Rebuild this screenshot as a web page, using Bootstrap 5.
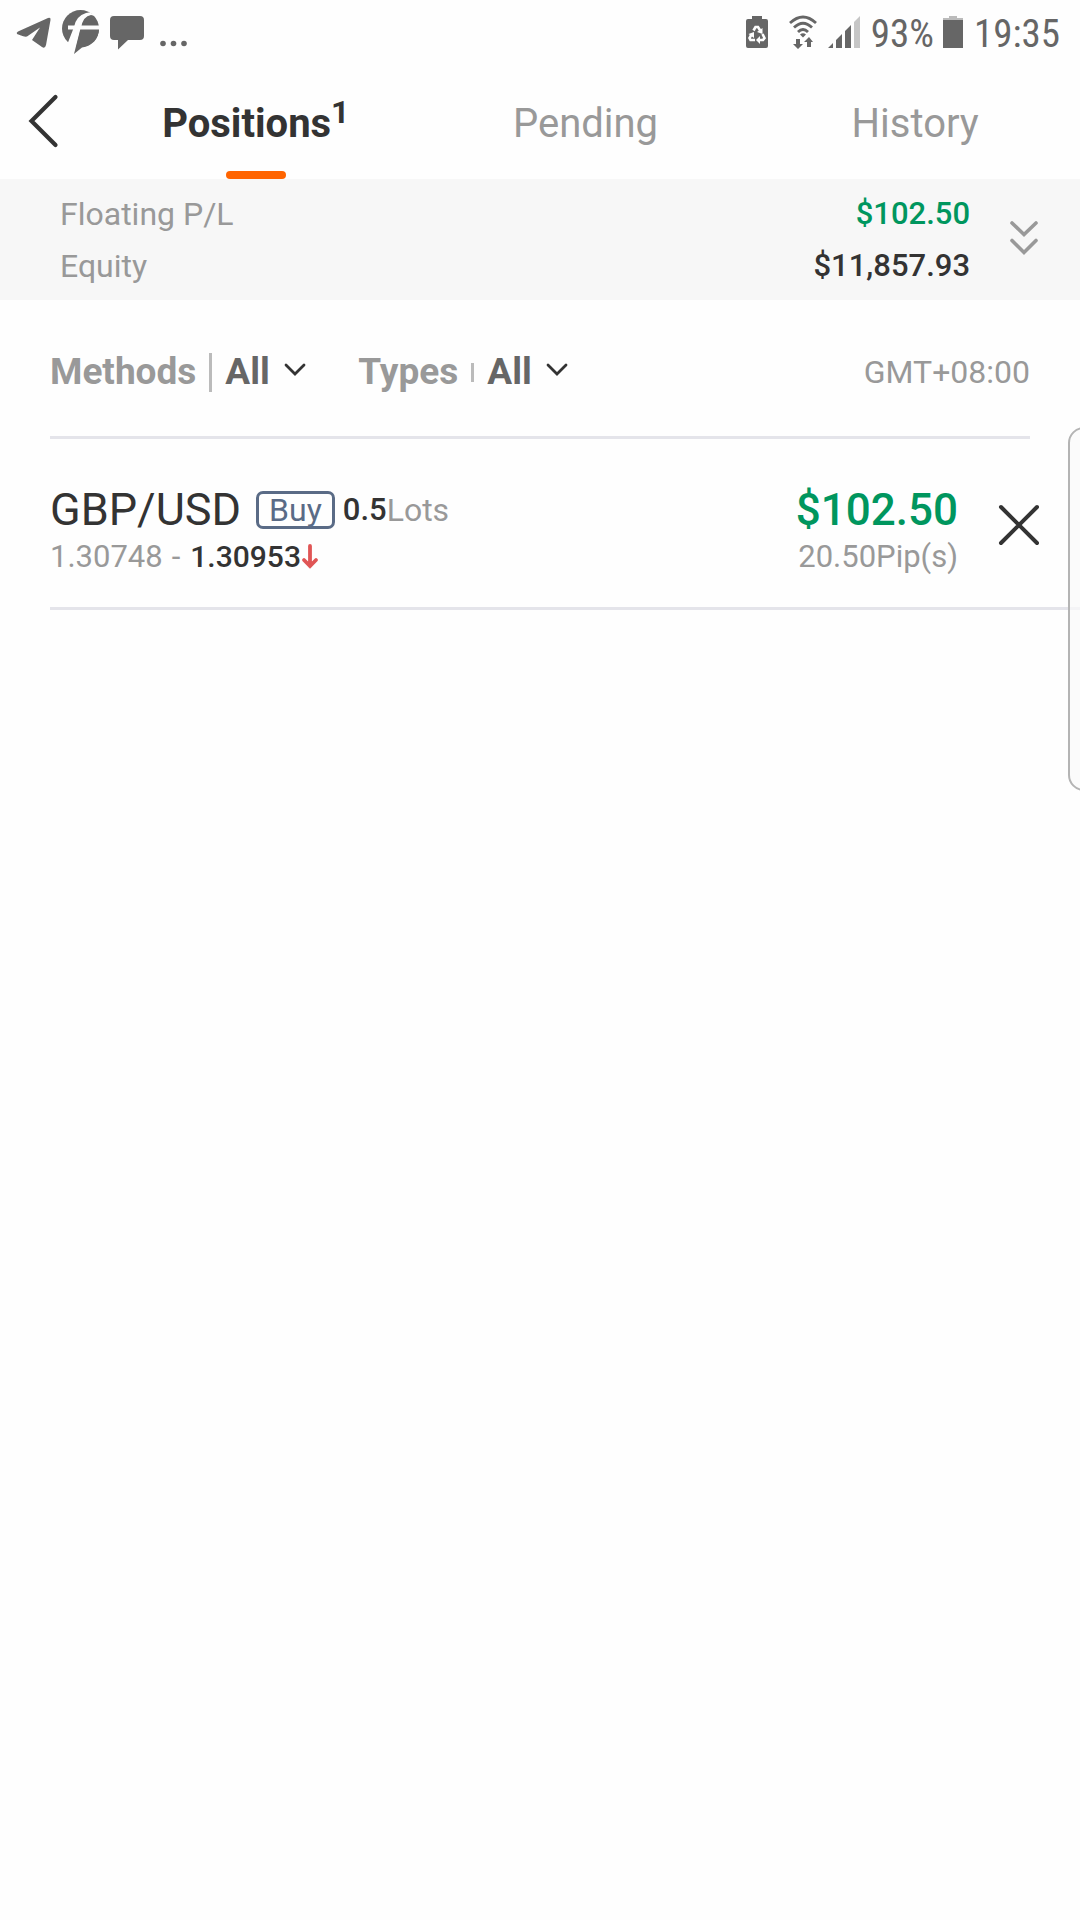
<!DOCTYPE html>
<html lang="en">
<head>
<meta charset="utf-8">
<meta name="viewport" content="width=device-width, initial-scale=1">
<title>Positions</title>
<link href="https://cdn.jsdelivr.net/npm/bootstrap@5.3.0/dist/css/bootstrap.min.css" rel="stylesheet">
<style>
body { font-family: Roboto, "Open Sans", sans-serif; font-size: 32px; line-height: 40px; color: #333; background: #fefefe; }
svg { display: block; flex: none; }
button { color: inherit; }
.ink-soft { color: #999; }
.ink-gain { color: #00965e; }
.status-bar { height: 66px; padding: 0 20px 0 16px; color: #666; font-family: "Roboto Condensed", Roboto, sans-serif; font-size: 39px; }
.status-icons { gap: 11px; }
.more-dots { margin-left: 5px; }
.status-wifi { margin-left: 21px; }
.status-signal { margin-left: 11px; }
.status-cell { margin-left: 9px; }
.status-text { margin-left: 11px; padding-top: 2px; }
.tab-bar { height: 113px; }
.back-btn { width: 91px; padding-left: 28px; padding-bottom: 4px; }
.tab-link { position: relative; height: 113px; font-size: 40px; color: #999; text-decoration: none; padding-top: 2px; }
.tab-link.active { color: #333; font-weight: 700; }
.tab-link.active::after { content: ""; position: absolute; bottom: 0; left: 50%; width: 60px; margin-left: -30px; height: 8px; border-radius: 4px; background: #ff6400; }
.tab-count { font-size: 32px; line-height: 32px; font-weight: 700; padding-bottom: 24px; }
.summary { background: #f7f7f7; height: 121px; padding: 0 40px 0 60px; }
.summary dl { row-gap: 12px; }
.summary-toggle { margin-left: 38px; padding: 0 0 4px; }
.figures { font-weight: 500; font-size: 31px; }
.filters { margin: 0 50px; padding: 51px 0 43px; border-bottom: 3px solid #e4e4ea; }
.filters label, .filters select { font-weight: 700; font-size: 37px; line-height: 42px; }
.filters select { appearance: none; border: 0; background: none; padding: 0; color: #666; }
.divider-tall, .divider-short { width: 3px; background: #bbb; margin: 0 13px; }
.divider-tall { height: 39px; }
.divider-short { height: 19px; }
.filter-chevron { margin: 0 0 4px 14px; pointer-events: none; }
.filter-gap { margin-left: 52px; }
.position-row { margin-left: 50px; padding: 45px 40px 29px 0; border-bottom: 3px solid #e4e4ea; }
.pair { font-size: 45px; line-height: 52px; }
.profit { font-size: 44px; line-height: 52px; font-weight: 500; }
.side-tag { border: 3px solid #5a6b86; border-radius: 7px; color: #5a6b86; line-height: 32px; padding: 0 10px; margin: 0 8px 0 15px; }
.rates { font-size: 31px; line-height: 42px; }
.rates .figures { font-size: 30px; }
.rate-dash { margin: 0 10px 0 9px; }
.close-btn { margin: 0 0 12px 40px; }
.edge-panel { position: absolute; top: 427px; right: -20px; width: 32px; height: 364px; border: 2px solid #b4b4b4; border-radius: 20px; background: rgba(250, 250, 250, .75); }
</style>
<script src="https://cdn.jsdelivr.net/npm/bootstrap@5.3.0/dist/js/bootstrap.bundle.min.js"></script>
</head>
<body>
<div class="position-relative overflow-hidden min-vh-100">
  <div class="status-bar d-flex justify-content-between align-items-center">
    <div class="status-icons d-flex align-items-center">
      <svg width="35" height="46" viewBox="0 0 35 46" fill="#666"><path d="M2 21.500 32 8Q35 7 34.500 10L30 35Q29 39 26 37L16 30 24 17.500 11 26.500Q8 27 5 25.500L1 24Q0 22.500 2 21.500Z"/></svg>
      <svg width="37" height="46" viewBox="0 0 37 46"><circle cx="18.500" cy="18.500" r="18.500" fill="#666"/><path fill="#fefefe" d="M33 6Q29 1 24 3 14 6 12 17L5 35 12 46 19 18Q21 6 29 5Z"/><path fill="#666" d="M18.500 18.500H37C37 29 30 36 20 37.500L12 44Z"/><path stroke="#fefefe" stroke-width="4" d="M6 17.500H37"/></svg>
      <svg width="34" height="46" viewBox="0 0 34 46" fill="#666"><path d="M4 6H30Q34 6 34 10V26Q34 30 30 30H18L8 39.500V30H4Q0 30 0 26V10Q0 6 4 6Z"/></svg>
      <svg class="more-dots" width="27" height="46" viewBox="0 0 27 46" fill="#666"><circle cx="3" cy="33.500" r="2.800"/><circle cx="13.500" cy="33.500" r="2.800"/><circle cx="24" cy="33.500" r="2.800"/></svg>
    </div>
    <div class="d-flex align-items-center">
      <svg width="22" height="34" viewBox="0 0 22 34"><path fill="#666" d="M6 0H16V3H20Q22 3 22 5V30Q22 32 20 32H2Q0 32 0 30V5Q0 3 2 3H6Z"/><g fill="none" stroke="#fefefe" stroke-width="2.600"><path d="M7.500 14.500 9.500 11H12L14.500 15M16.500 18 18.500 22 17 24H13M9 24H4.500L3.500 22 5.500 18.500"/></g><path fill="#fefefe" d="M16.500 12V18L11 16ZM14 20V28L10 24ZM2.500 18 8 16V22Z"/></svg>
      <svg class="status-wifi" width="28" height="36" viewBox="0 0 28 36"><g fill="none" stroke="#666" stroke-width="2.800"><path d="M1 8Q14-4 27 8M5 12.500Q14 4 23 12.500M9 17Q14 12 19 17"/></g><path fill="#666" d="M11 19.500Q14 17 17 19.500L14 22.500ZM7 24H11V29H14L9 34 4 29H7ZM18 32V27H15L20 22 24 27H22V32Z"/></svg>
      <svg class="status-signal" width="32" height="34" viewBox="0 0 32 34"><path fill="#666" d="M0 32 5 27V32ZM8 24 14 18V32H8ZM17 15 23 9V32H17Z"/><path fill="#c6c6c6" d="M26 6 32 0V32H26Z"/></svg>
      <span class="status-text">93%</span>
      <svg class="status-cell" width="20" height="34" viewBox="0 0 20 34"><path fill="#bbb" d="M6 0H14V2H20V5H0V2H6Z"/><path fill="#666" d="M0 4H20V32H0Z"/></svg>
      <span class="status-text">19:35</span>
    </div>
  </div>

  <nav class="tab-bar d-flex align-items-stretch" aria-label="Orders">
    <button class="back-btn border-0 bg-transparent" type="button" aria-label="Back">
      <svg width="32" height="54" viewBox="0 0 32 54" fill="none" stroke="#333" stroke-width="4.200" stroke-linecap="round" stroke-linejoin="miter"><path d="M27.500 3 3.500 27 27.500 51"/></svg>
    </button>
    <div class="row g-0 flex-fill text-center">
      <a class="col tab-link active d-flex justify-content-center align-items-center" href="#" aria-current="page">Positions<span class="tab-count">1</span></a>
      <a class="col tab-link d-flex justify-content-center align-items-center" href="#">Pending</a>
      <a class="col tab-link d-flex justify-content-center align-items-center" href="#">History</a>
    </div>
  </nav>

  <section class="summary d-flex align-items-center">
    <dl class="d-flex flex-column flex-fill mb-0">
      <div class="d-flex justify-content-between"><dt class="fw-normal ink-soft">Floating P/L</dt><dd class="figures ink-gain mb-0">$102.50</dd></div>
      <div class="d-flex justify-content-between"><dt class="fw-normal ink-soft">Equity</dt><dd class="figures mb-0">$11,857.93</dd></div>
    </dl>
    <button class="summary-toggle border-0 bg-transparent" type="button" aria-label="Show details">
      <svg width="32" height="38" viewBox="0 0 32 38" fill="none" stroke="#999" stroke-width="3.600" stroke-linecap="round"><path d="M4 4 16 15.500 28 4M4 21.500 16 33.500 28 21.500"/></svg>
    </button>
  </section>

  <form class="filters d-flex align-items-center">
    <label class="ink-soft" for="methods">Methods</label>
    <span class="divider-tall"></span>
    <select id="methods"><option>All</option></select>
    <svg class="filter-chevron" width="22" height="14" viewBox="0 0 22 14" fill="none" stroke="#333" stroke-width="2.800" stroke-linecap="round"><path d="M2 2 11 11 20 2"/></svg>
    <label class="filter-gap ink-soft" for="types">Types</label>
    <span class="divider-short"></span>
    <select id="types"><option>All</option></select>
    <svg class="filter-chevron" width="22" height="14" viewBox="0 0 22 14" fill="none" stroke="#333" stroke-width="2.800" stroke-linecap="round"><path d="M2 2 11 11 20 2"/></svg>
    <span class="ms-auto ink-soft">GMT+08:00</span>
  </form>

  <article class="position-row d-flex align-items-center">
    <div class="flex-fill">
      <div class="d-flex align-items-center">
        <span class="pair">GBP/USD</span>
        <span class="side-tag">Buy</span>
        <span class="figures">0.5</span><span class="ink-soft">Lots</span>
      </div>
      <div class="rates d-flex align-items-center">
        <span class="ink-soft">1.30748</span><span class="rate-dash ink-soft">-</span><span class="figures">1.30953</span>
        <svg width="18" height="28" viewBox="0 0 18 28" fill="none" stroke="#e05555" stroke-width="3.800" stroke-linecap="round"><path d="M9 3V23M3 17 9 23 15 17"/></svg>
      </div>
    </div>
    <div class="text-end">
      <div class="profit ink-gain">$102.50</div>
      <div class="rates ink-soft">20.50Pip(s)</div>
    </div>
    <button class="close-btn border-0 bg-transparent p-0" type="button" aria-label="Close position">
      <svg width="42" height="42" viewBox="0 0 42 42" stroke="#333" stroke-width="4" stroke-linecap="round"><path d="M3 3 39 39M39 3 3 39"/></svg>
    </button>
  </article>
  <div class="edge-panel"></div>
</div>
</body>
</html>
